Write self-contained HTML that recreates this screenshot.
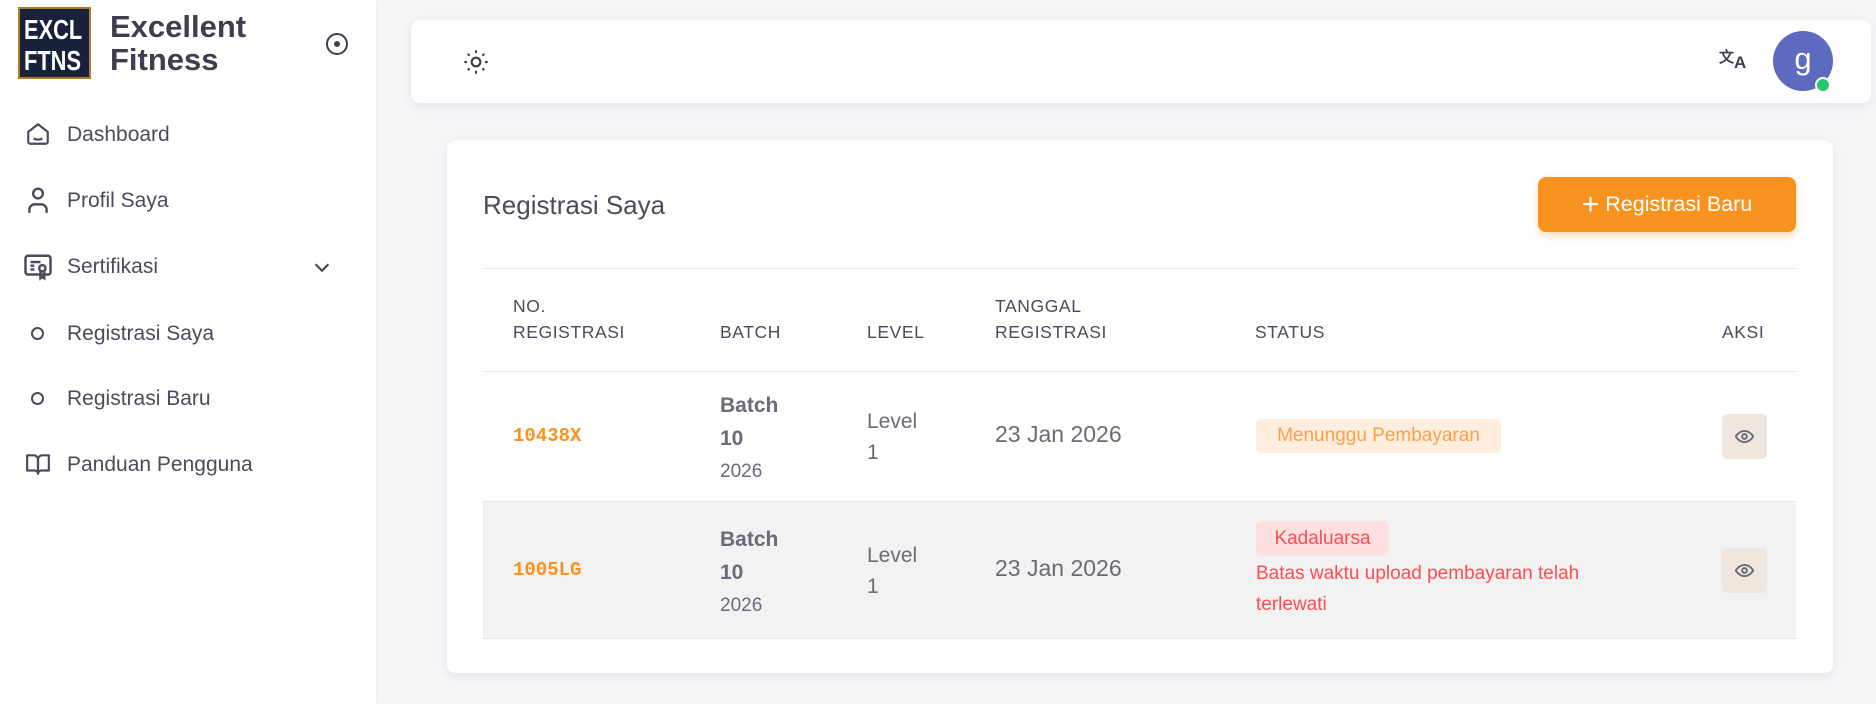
<!DOCTYPE html>
<html><head><meta charset="utf-8"><style>
*{margin:0;padding:0;box-sizing:border-box}
body{width:1876px;height:704px;background:#f6f6f9;font-family:"Liberation Sans",sans-serif;color:#4b4b5e;position:relative;overflow:hidden}
.a{position:absolute;white-space:nowrap}
.side{left:0;top:0;width:376px;height:704px;background:#fff;box-shadow:1px 0 4px rgba(0,0,0,.05)}
.logo{left:18px;top:7px;width:73px;height:72px;background:#17213a;border:2px solid #b07a2a}
.logo div{position:absolute;left:4px;top:5px;width:62px;color:#fff;font:bold 28px/31px "Liberation Sans",sans-serif;transform:scaleX(.78);transform-origin:0 0;width:80px;text-align:left;letter-spacing:0}
.brand{left:110px;top:10px;font-weight:bold;font-size:31px;line-height:33px;color:#3e3e50}
.nav{left:67px;font-size:21px;color:#4b4b5e}
.card{background:#fff;border-radius:9px;box-shadow:0 3px 10px rgba(40,40,70,.08)}
.th{font-size:17.5px;letter-spacing:.6px;color:#4b4b5e;line-height:26px}
.code{font:bold 19px "Liberation Mono",monospace;color:#f7931e}
.b{font-weight:bold;font-size:21px;color:#6a6a78}
.g{font-size:19px;color:#6a6a78}
.eye{width:45px;height:45px;background:#efe6dd;border-radius:5px}
</style></head><body>
<div class="a side"></div>
<div class="a logo"><div>EXCL<br>FTNS</div></div>
<div class="a brand">Excellent<br>Fitness</div>
<svg class="a" style="left:325px;top:32px" width="24" height="24" viewBox="0 0 24 24" fill="none" stroke="#3e3e50" stroke-width="2"><circle cx="12" cy="12" r="10"/><circle cx="12" cy="12" r="2" fill="#3e3e50"/></svg>

<svg class="a" style="left:25px;top:121px" width="26" height="26" viewBox="0 0 24 24" fill="none" stroke="#4b4b5e" stroke-width="2" stroke-linejoin="round"><path d="M3 10l9-7 9 7v9a2 2 0 0 1-2 2H5a2 2 0 0 1-2-2z"/><path d="M8 16c2 1.5 6 1.5 8 0"/></svg>
<div class="a nav" style="top:123px">Dashboard</div>
<svg class="a" style="left:25px;top:186px" width="26" height="28" viewBox="0 0 24 26" fill="none" stroke="#4b4b5e" stroke-width="2.2"><circle cx="12" cy="7" r="4.5"/><path d="M4 25v-3a5 5 0 0 1 5-5h6a5 5 0 0 1 5 5v3"/></svg>
<div class="a nav" style="top:189px">Profil Saya</div>
<svg class="a" style="left:23px;top:252px" width="30" height="30" viewBox="0 0 24 24" fill="none" stroke="#4b4b5e" stroke-width="2"><rect x="2" y="3" width="20" height="15" rx="2"/><path d="M6 8h8M6 11h3M6 14h3"/><circle cx="15.5" cy="13" r="2.5"/><path d="M14 15v6l1.5-1 1.5 1v-6"/></svg>
<div class="a nav" style="top:255px">Sertifikasi</div>
<svg class="a" style="left:311px;top:256px" width="22" height="22" viewBox="0 0 24 24" fill="none" stroke="#3e3e50" stroke-width="2.2"><path d="M5 9l7 7 7-7"/></svg>
<div class="a" style="left:31px;top:327px;width:13px;height:13px;border:2px solid #4b4b5e;border-radius:50%"></div>
<div class="a nav" style="top:322px">Registrasi Saya</div>
<div class="a" style="left:31px;top:392px;width:13px;height:13px;border:2px solid #4b4b5e;border-radius:50%"></div>
<div class="a nav" style="top:387px">Registrasi Baru</div>
<svg class="a" style="left:24px;top:451px" width="28" height="26" viewBox="0 0 24 24" fill="none" stroke="#4b4b5e" stroke-width="2" stroke-linejoin="round"><path d="M2 4h6a4 4 0 0 1 4 4v13a3 3 0 0 0-3-3H2z"/><path d="M22 4h-6a4 4 0 0 0-4 4v13a3 3 0 0 1 3-3h7z"/></svg>
<div class="a nav" style="top:453px">Panduan Pengguna</div>

<div class="a card" style="left:411px;top:20px;width:1460px;height:83px"></div>
<svg class="a" style="left:463px;top:49px" width="26" height="26" viewBox="0 0 24 24" fill="none" stroke="#3e3e50" stroke-width="2" stroke-linecap="round"><circle cx="12" cy="12" r="4"/><path d="M12 2v1M12 21v1M2 12h1M21 12h1M5 5l.5.5M18.5 18.5l.5.5M5 19l.5-.5M18.5 5.5L19 5"/></svg>
<div class="a" style="left:1719px;top:46px;font-weight:bold;font-size:15px;color:#3e3e50">文<span style="font-size:17px;position:relative;top:6px">A</span></div>
<div class="a" style="left:1773px;top:31px;width:60px;height:60px;border-radius:50%;background:#5c6bc0;color:#fff;font-size:31px;text-align:center;line-height:56px">g</div>
<div class="a" style="left:1815px;top:77px;width:16px;height:16px;border-radius:50%;background:#28c76f;border:2px solid #fff"></div>

<div class="a card" style="left:447px;top:140px;width:1386px;height:533px"></div>
<div class="a" style="left:483px;top:190px;font-size:26px;color:#4b4b5e">Registrasi Saya</div>
<div class="a" style="left:1538px;top:177px;width:258px;height:55px;background:#f7931e;border-radius:8px;color:#fff;font-size:21.5px;line-height:55px;text-align:center;box-shadow:0 3px 8px rgba(247,147,30,.35)"><span style="font-size:30px;vertical-align:-3px;font-weight:300">+</span> Registrasi Baru</div>

<div class="a" style="left:483px;top:268px;width:1313px;height:1px;background:#e6e6e8"></div>
<div class="a th" style="left:513px;top:293px">NO.<br>REGISTRASI</div>
<div class="a th" style="left:720px;top:319px">BATCH</div>
<div class="a th" style="left:867px;top:319px">LEVEL</div>
<div class="a th" style="left:995px;top:293px">TANGGAL<br>REGISTRASI</div>
<div class="a th" style="left:1255px;top:319px">STATUS</div>
<div class="a th" style="left:1722px;top:319px">AKSI</div>
<div class="a" style="left:483px;top:371px;width:1313px;height:1px;background:#e6e6e8"></div>

<div class="a code" style="left:513px;top:425px">10438X</div>
<div class="a" style="left:720px;top:390px;line-height:31px"><span class="b">Batch<br>10</span><br><span class="g">2026</span></div>
<div class="a g" style="left:867px;top:406px;line-height:31px;font-size:21px">Level<br>1</div>
<div class="a g" style="left:995px;top:421px;font-size:23px">23 Jan 2026</div>
<div class="a" style="left:1256px;top:419px;width:245px;height:34px;background:#ffeedd;border-radius:5px;color:#ff9f43;font-size:19px;line-height:34px;text-align:center">Menunggu Pembayaran</div>
<svg class="a eye" style="left:1722px;top:414px;padding:13px" width="45" height="45" viewBox="0 0 24 24" fill="none" stroke="#6a6a78" stroke-width="2.4"><path d="M1 12s4-7 11-7 11 7 11 7-4 7-11 7S1 12 1 12z"/><circle cx="12" cy="12" r="3"/></svg>

<div class="a" style="left:483px;top:501px;width:1313px;height:1px;background:#e6e6e8"></div>
<div class="a" style="left:483px;top:502px;width:1313px;height:136px;background:#f2f2f2"></div>
<div class="a code" style="left:513px;top:559px">1005LG</div>
<div class="a" style="left:720px;top:524px;line-height:31px"><span class="b">Batch<br>10</span><br><span class="g">2026</span></div>
<div class="a g" style="left:867px;top:540px;line-height:31px;font-size:21px">Level<br>1</div>
<div class="a g" style="left:995px;top:555px;font-size:23px">23 Jan 2026</div>
<div class="a" style="left:1256px;top:521px;width:133px;height:35px;background:#ffe0e1;border-radius:5px;color:#ff4c51;font-size:19px;line-height:35px;text-align:center">Kadaluarsa</div>
<div class="a" style="left:1256px;top:558px;color:#ff4c51;font-size:19px;line-height:31px">Batas waktu upload pembayaran telah<br>terlewati</div>
<svg class="a eye" style="left:1722px;top:548px;padding:13px" width="45" height="45" viewBox="0 0 24 24" fill="none" stroke="#6a6a78" stroke-width="2.4"><path d="M1 12s4-7 11-7 11 7 11 7-4 7-11 7S1 12 1 12z"/><circle cx="12" cy="12" r="3"/></svg>
<div class="a" style="left:483px;top:638px;width:1313px;height:1px;background:#e6e6e8"></div>
</body></html>
